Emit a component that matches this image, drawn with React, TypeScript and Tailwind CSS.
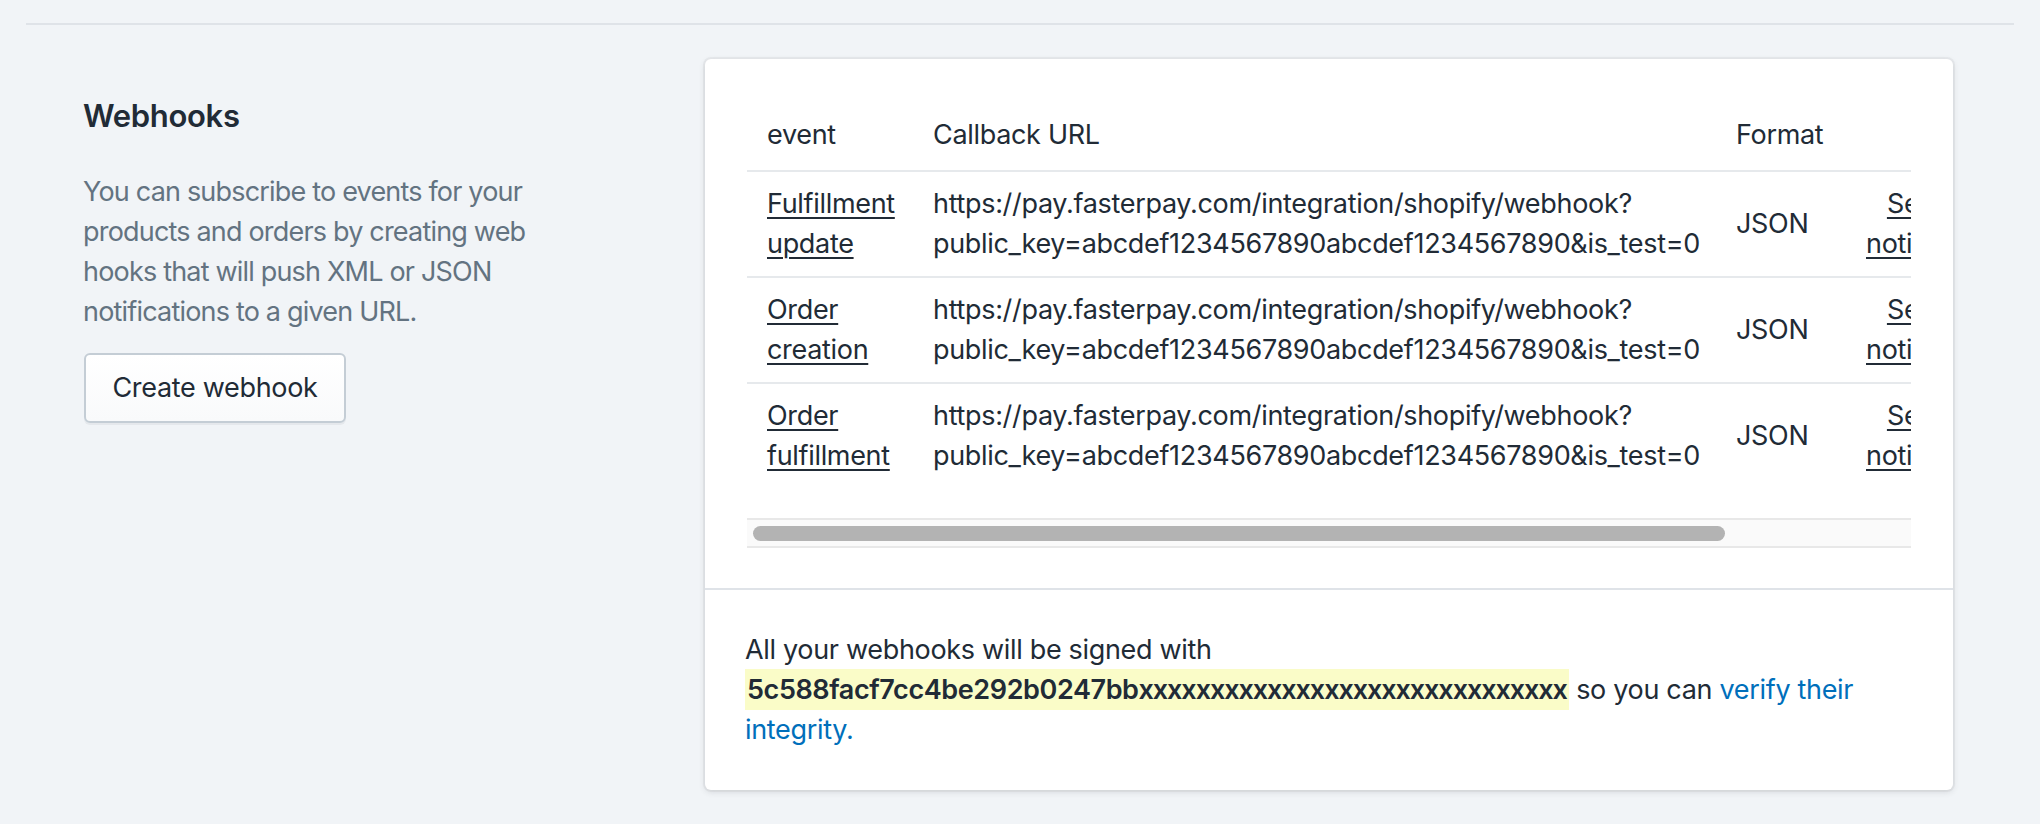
import React from "react";

const rows = [
  { event: ["Fulfillment", "update"] },
  { event: ["Order", "creation"] },
  { event: ["Order", "fulfillment"] },
];

export default function App() {
  return (
    <div
      className="min-h-screen w-full bg-[#f1f4f7] pt-[23px] tracking-[-0.02em] text-[#212b36]"
      style={{ fontFamily: "Inter, 'Noto Sans', sans-serif" }}
    >
      <div className="mx-[26px]">
        <div className="h-[2px] bg-[#dfe3e8]" />
        <div className="mt-[34px] flex pl-[57px]">
          {/* Annotation */}
          <div className="w-[622px] shrink-0 pt-[33px]">
            <h2 className="text-[31px] font-semibold leading-[48px] text-[#212b36]">
              Webhooks
            </h2>
            <p className="mt-[32px] text-[27px] leading-[40px] tracking-[-0.03em] text-[#637381]">
              You can subscribe to events for your
              <br />
              products and orders by creating web
              <br />
              hooks that will push XML or JSON
              <br />
              notifications to a given URL.
            </p>
            <button className="mt-[21px] ml-[1px] flex h-[70px] w-[262px] items-center justify-center rounded-[6px] border-2 border-[#c4cdd5] bg-gradient-to-b from-white to-[#f9fafb] text-[27px] leading-[40px] text-[#212b36] shadow-[0_2px_0_rgba(22,29,37,0.05)]">
              Create webhook
            </button>
          </div>

          {/* Card */}
          <div className="w-[1248px] shrink-0 rounded-[6px] bg-white shadow-[0_0_0_2px_rgba(63,63,68,0.05),0_2px_6px_0_rgba(63,63,68,0.15)]">
            <div className="px-[42px] pt-[41px] pb-[40px]">
              <div className="w-[1164px] overflow-hidden">
                <table
                  className="table-fixed border-collapse text-[27px] leading-[40px] text-[#212b36]"
                  style={{ width: 1340 }}
                >
                  <colgroup>
                    <col className="w-[166px]" />
                    <col className="w-[803px]" />
                    <col className="w-[130px]" />
                    <col className="w-[241px]" />
                  </colgroup>
                  <thead>
                    <tr className="border-b-2 border-[#e6e9ec]">
                      <th className="px-[20px] py-[15px] text-left font-normal">event</th>
                      <th className="px-[20px] py-[15px] text-left font-normal">Callback URL</th>
                      <th className="px-[20px] py-[15px] text-left font-normal">Format</th>
                      <th className="px-[20px] py-[15px]" />
                    </tr>
                  </thead>
                  <tbody>
                    {rows.map((r, i) => (
                      <tr
                        key={i}
                        className={i < rows.length - 1 ? "border-b-2 border-[#e6e9ec]" : ""}
                      >
                        <td className="whitespace-nowrap px-[20px] py-[12px] align-middle">
                          <a href="#" className="underline decoration-[2px] underline-offset-[4px]">
                            {r.event[0]}
                            <br />
                            {r.event[1]}
                          </a>
                        </td>
                        <td className="whitespace-nowrap px-[20px] py-[12px] align-middle">
                          https://pay.fasterpay.com/integration/shopify/webhook?
                          <br />
                          public_key=abcdef1234567890abcdef1234567890&amp;is_test=0
                        </td>
                        <td className="px-[20px] py-[12px] align-middle">JSON</td>
                        <td className="whitespace-nowrap px-[20px] py-[12px] align-middle">
                          <div className="inline-block text-right">
                            <a href="#" className="underline decoration-[2px] underline-offset-[4px]">
                              Send test
                              <br />
                              notification
                            </a>
                          </div>
                        </td>
                      </tr>
                    ))}
                  </tbody>
                </table>
              </div>
              {/* scrollbar */}
              <div className="mt-[30px] flex h-[30px] w-[1164px] items-center border-y-2 border-[#e8e8e8] bg-[#fafafa]">
                <div className="ml-[6px] h-[15px] w-[972px] rounded-full bg-[#b3b3b3]" />
              </div>
            </div>
            <div className="h-[2px] bg-[#dfe3e8]" />
            <div className="px-[40px] pt-[40px] pb-[40px] text-[27px] leading-[40px] text-[#212b36]">
              All your webhooks will be signed with
              <br />
              <span className="whitespace-nowrap bg-[#fafcc8] px-[2px] py-[4px] text-[27px] font-semibold">
                <span className="tracking-[-0.015em]">5c588facf7cc4be292b0247bb</span>
                <span className="tracking-[-0.04em]">xxxxxxxxxxxxxxxxxxxxxxxxxxxxxx</span>
              </span>{" "}
              so you can{" "}
              <a href="#" className="text-[#006fbb]">
                verify their
                <br />
                integrity.
              </a>
            </div>
          </div>
        </div>
      </div>
    </div>
  );
}
